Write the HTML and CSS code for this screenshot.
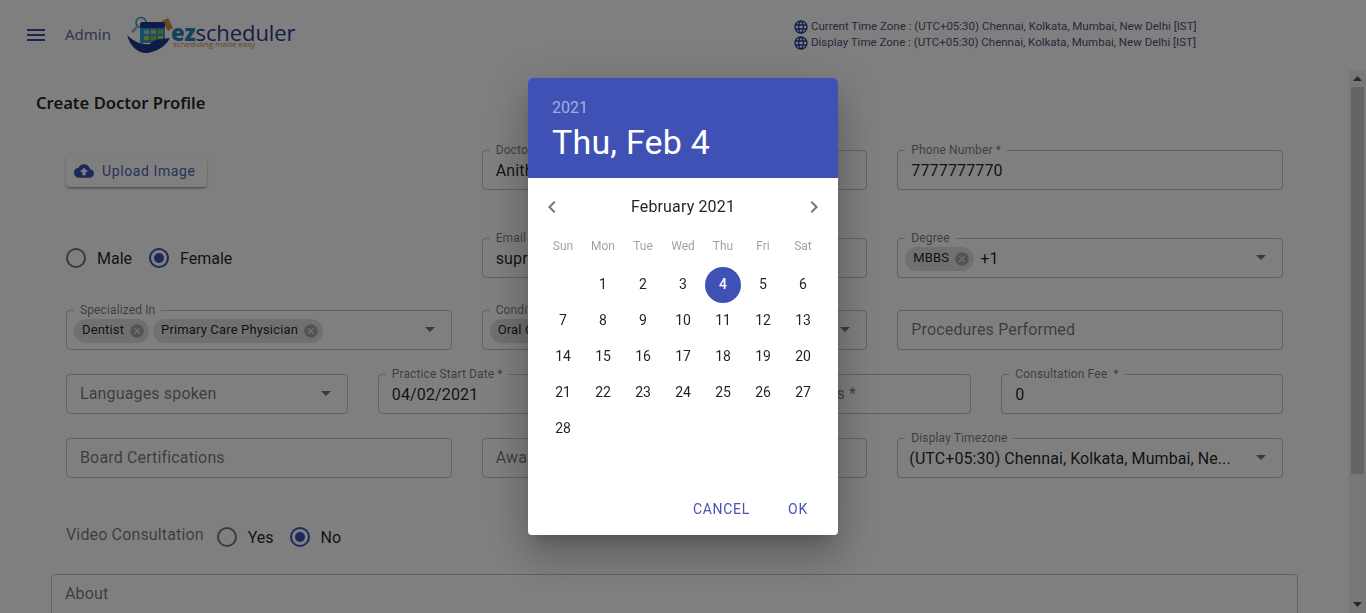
FILE: index.html
```html
<!DOCTYPE html>
<html>
<head>
    <meta charset="utf-8">
    <title>Create Doctor Profile</title>
    <link rel="stylesheet" href="styles.css">
</head>
<body>
    <header class="topbar">
        <div class="menu-icon"><span></span><span></span><span></span></div>
        <div class="admin">Admin</div>
        <div class="logo">
            <svg class="logo-mark" width="50" height="40" viewBox="0 0 50 40">
                <path d="M11 11L6 16" stroke="#a5b0bf" stroke-width="3"/>
                <circle cx="15" cy="6.5" r="5" fill="none" stroke="#2f9fc4" stroke-width="1.6"/>
                <path d="M36 5l6-3 5 10-5 3z" fill="#d98a4a"/>
                <rect x="14" y="8" width="25" height="19" fill="#2aa0c8"/>
                <rect x="14" y="6" width="25" height="6" rx="2" fill="#22368f"/>
                <rect x="18" y="14" width="5" height="4" fill="#8fd0e6"/>
                <rect x="25" y="14" width="5" height="4" fill="#e3c23f"/>
                <rect x="32" y="14" width="5" height="4" fill="#8bc34a"/>
                <rect x="18" y="20" width="5" height="4" fill="#e3c23f"/>
                <rect x="25" y="20" width="5" height="4" fill="#8bc34a"/>
                <rect x="32" y="20" width="5" height="4" fill="#e3c23f"/>
                <path d="M1 19C8 26 16 29 24 28c2-3 8-5 12-5l8-1c-4 8-12 13-22 15C12 38 4 30 1 19z" fill="#22368f"/>
            </svg>
            <div class="logo-text">
                <div class="logo-name"><b>ez</b>scheduler</div>
                <div class="logo-tag">scheduling made easy</div>
            </div>
        </div>
        <div class="zones">
            <div class="zone">
                <svg width="16" height="16" viewBox="0 0 24 24"><path d="M11.99 2C6.47 2 2 6.48 2 12s4.47 10 9.99 10C17.52 22 22 17.52 22 12S17.52 2 11.99 2zm6.93 6h-2.95c-.32-1.25-.78-2.45-1.38-3.56 1.84.63 3.37 1.91 4.33 3.56zM12 4.04c.83 1.2 1.48 2.53 1.91 3.96h-3.82c.43-1.43 1.08-2.76 1.91-3.96zM4.26 14C4.1 13.36 4 12.69 4 12s.1-1.36.26-2h3.38c-.08.66-.14 1.32-.14 2 0 .68.06 1.34.14 2H4.26zm.82 2h2.95c.32 1.25.78 2.45 1.38 3.56-1.84-.63-3.37-1.9-4.33-3.56zm2.95-8H5.08c.96-1.66 2.49-2.93 4.33-3.56C8.81 5.55 8.35 6.75 8.03 8zM12 19.96c-.83-1.2-1.48-2.53-1.91-3.96h3.82c-.43 1.43-1.08 2.76-1.91 3.96zM14.34 14H9.66c-.09-.66-.16-1.32-.16-2 0-.68.07-1.35.16-2h4.68c.09.65.16 1.32.16 2 0 .68-.07 1.34-.16 2zm.25 5.56c.6-1.11 1.06-2.31 1.38-3.56h2.95c-.96 1.65-2.49 2.93-4.33 3.56zM16.36 14c.08-.66.14-1.32.14-2 0-.68-.06-1.34-.14-2h3.38c.16.64.26 1.31.26 2s-.1 1.36-.26 2h-3.38z"/></svg>
                <span>Current Time Zone : (UTC+05:30) Chennai, Kolkata, Mumbai, New Delhi [IST]</span>
            </div>
            <div class="zone">
                <svg width="16" height="16" viewBox="0 0 24 24"><path d="M11.99 2C6.47 2 2 6.48 2 12s4.47 10 9.99 10C17.52 22 22 17.52 22 12S17.52 2 11.99 2zm6.93 6h-2.95c-.32-1.25-.78-2.45-1.38-3.56 1.84.63 3.37 1.91 4.33 3.56zM12 4.04c.83 1.2 1.48 2.53 1.91 3.96h-3.82c.43-1.43 1.08-2.76 1.91-3.96zM4.26 14C4.1 13.36 4 12.69 4 12s.1-1.36.26-2h3.38c-.08.66-.14 1.32-.14 2 0 .68.06 1.34.14 2H4.26zm.82 2h2.95c.32 1.25.78 2.45 1.38 3.56-1.84-.63-3.37-1.9-4.33-3.56zm2.95-8H5.08c.96-1.66 2.49-2.93 4.33-3.56C8.81 5.55 8.35 6.75 8.03 8zM12 19.96c-.83-1.2-1.48-2.53-1.91-3.96h3.82c-.43 1.43-1.08 2.76-1.91 3.96zM14.34 14H9.66c-.09-.66-.16-1.32-.16-2 0-.68.07-1.35.16-2h4.68c.09.65.16 1.32.16 2 0 .68-.07 1.34-.16 2zm.25 5.56c.6-1.11 1.06-2.31 1.38-3.56h2.95c-.96 1.65-2.49 2.93-4.33 3.56zM16.36 14c.08-.66.14-1.32.14-2 0-.68-.06-1.34-.14-2h3.38c.16.64.26 1.31.26 2s-.1 1.36-.26 2h-3.38z"/></svg>
                <span>Display Time Zone : (UTC+05:30) Chennai, Kolkata, Mumbai, New Delhi [IST]</span>
            </div>
        </div>
    </header>

    <div class="content">
        <main class="page">
            <h1 class="title">Create Doctor Profile</h1>
            <div class="form">
                <div class="row row-first">
                    <div class="col-4">
                        <button class="upload">
                            <svg width="20" height="20" viewBox="0 0 24 24"><path d="M19.35 10.04C18.67 6.59 15.64 4 12 4 9.11 4 6.6 5.64 5.35 8.04 2.34 8.36 0 10.91 0 14c0 3.31 2.69 6 6 6h13c2.76 0 5-2.24 5-5 0-2.64-2.05-4.78-4.65-4.96zM14 13v4h-4v-4H7l5-5 5 5h-3z"/></svg>
                            Upload Image
                        </button>
                    </div>
                    <fieldset class="field col-4"><legend>Doctor Name *</legend><div class="value">Anitha</div></fieldset>
                    <fieldset class="field col-4"><legend>Phone Number *</legend><div class="value">7777777770</div></fieldset>
                </div>

                <div class="row row-second">
                    <div class="col-4 radios radios-gender">
                        <label class="radio-item"><i class="radio"></i>Male</label>
                        <label class="radio-item"><i class="radio checked"></i>Female</label>
                    </div>
                    <fieldset class="field col-4"><legend>Email *</legend><div class="value">supriya@example.com</div></fieldset>
                    <fieldset class="field col-4"><legend>Degree</legend>
                        <div class="value chips">
                            <span class="chip">MBBS<svg viewBox="0 0 24 24"><path d="M12 2C6.47 2 2 6.47 2 12s4.47 10 10 10 10-4.47 10-10S17.53 2 12 2zm5 13.59L15.59 17 12 13.41 8.41 17 7 15.59 10.59 12 7 8.41 8.41 7 12 10.59 15.59 7 17 8.41 13.41 12 17 15.59z"/></svg></span>
                            <span class="more">+1</span>
                        </div>
                        <svg class="arrow" viewBox="0 0 24 24"><path d="M7 10l5 5 5-5z"/></svg>
                    </fieldset>
                </div>

                <div class="row">
                    <fieldset class="field col-4"><legend>Specialized In</legend>
                        <div class="value chips">
                            <span class="chip">Dentist<svg viewBox="0 0 24 24"><path d="M12 2C6.47 2 2 6.47 2 12s4.47 10 10 10 10-4.47 10-10S17.53 2 12 2zm5 13.59L15.59 17 12 13.41 8.41 17 7 15.59 10.59 12 7 8.41 8.41 7 12 10.59 15.59 7 17 8.41 13.41 12 17 15.59z"/></svg></span>
                            <span class="chip">Primary Care Physician<svg viewBox="0 0 24 24"><path d="M12 2C6.47 2 2 6.47 2 12s4.47 10 10 10 10-4.47 10-10S17.53 2 12 2zm5 13.59L15.59 17 12 13.41 8.41 17 7 15.59 10.59 12 7 8.41 8.41 7 12 10.59 15.59 7 17 8.41 13.41 12 17 15.59z"/></svg></span>
                        </div>
                        <svg class="arrow" viewBox="0 0 24 24"><path d="M7 10l5 5 5-5z"/></svg>
                    </fieldset>
                    <fieldset class="field col-4"><legend>Conditions Treated</legend>
                        <div class="value chips">
                            <span class="chip">Oral Care</span>
                        </div>
                        <svg class="arrow" viewBox="0 0 24 24"><path d="M7 10l5 5 5-5z"/></svg>
                    </fieldset>
                    <fieldset class="field col-4"><legend class="no-label"></legend><div class="value hint">Procedures Performed</div></fieldset>
                </div>

                <div class="row">
                    <fieldset class="field col-3"><legend class="no-label"></legend><div class="value hint">Languages spoken</div>
                        <svg class="arrow" viewBox="0 0 24 24"><path d="M7 10l5 5 5-5z"/></svg>
                    </fieldset>
                    <fieldset class="field col-3"><legend>Practice Start Date *</legend><div class="value">04/02/2021</div></fieldset>
                    <fieldset class="field col-3"><legend class="no-label"></legend><div class="value hint">Experience in Years *</div></fieldset>
                    <fieldset class="field col-3"><legend>Consultation Fee &nbsp;*</legend><div class="value">0</div></fieldset>
                </div>

                <div class="row">
                    <fieldset class="field col-4"><legend class="no-label"></legend><div class="value hint">Board Certifications</div></fieldset>
                    <fieldset class="field col-4"><legend class="no-label"></legend><div class="value hint">Awards</div></fieldset>
                    <fieldset class="field col-4"><legend>Display Timezone</legend>
                        <div class="value tz-value">(UTC+05:30) Chennai, Kolkata, Mumbai, Ne...</div>
                        <svg class="arrow" viewBox="0 0 24 24"><path d="M7 10l5 5 5-5z"/></svg>
                    </fieldset>
                </div>

                <div class="video">
                    <span class="video-label">Video Consultation</span>
                    <div class="radios radios-video">
                        <label class="radio-item"><i class="radio"></i>Yes</label>
                        <label class="radio-item"><i class="radio checked"></i>No</label>
                    </div>
                </div>
            </div>
            <div class="about">About</div>
        </main>

        <aside class="scrollbar">
            <div class="scroll-btn"><svg width="9" height="5" viewBox="0 0 9 5"><path d="M4.5 0L9 5H0z"/></svg></div>
            <div class="scroll-track"><div class="scroll-thumb"></div></div>
            <div class="scroll-btn"><svg width="9" height="5" viewBox="0 0 9 5"><path d="M0 0h9L4.5 5z"/></svg></div>
        </aside>
    </div>

    <!-- date picker -->
    <div class="backdrop">
        <div class="dialog">
            <div class="dialog-head">
                <div class="head-year">2021</div>
                <div class="head-date">Thu, Feb 4</div>
            </div>
            <div class="calendar">
                <div class="month-bar">
                    <span class="nav"><svg width="24" height="24" viewBox="0 0 24 24"><path d="M15.41 16.59L10.83 12l4.58-4.59L14 6l-6 6 6 6 1.41-1.41z"/></svg></span>
                    <span class="month">February 2021</span>
                    <span class="nav"><svg width="24" height="24" viewBox="0 0 24 24"><path d="M8.59 16.59L13.17 12 8.59 7.41 10 6l6 6-6 6-1.41-1.41z"/></svg></span>
                </div>
                <div class="weekdays">
                    <span>Sun</span><span>Mon</span><span>Tue</span><span>Wed</span><span>Thu</span><span>Fri</span><span>Sat</span>
                </div>
                <div class="days">
                    <span></span><span>1</span><span>2</span><span>3</span><span class="selected">4</span><span>5</span><span>6</span>
                    <span>7</span><span>8</span><span>9</span><span>10</span><span>11</span><span>12</span><span>13</span>
                    <span>14</span><span>15</span><span>16</span><span>17</span><span>18</span><span>19</span><span>20</span>
                    <span>21</span><span>22</span><span>23</span><span>24</span><span>25</span><span>26</span><span>27</span>
                    <span>28</span>
                </div>
            </div>
            <div class="dialog-actions">
                <button class="action">CANCEL</button>
                <button class="action">OK</button>
            </div>
        </div>
    </div>
</body>
</html>
```

FILE: styles.css
```css
* {
    box-sizing: border-box;
}
html, body {
    height: 100%;
}
body {
    margin: 0;
    overflow: hidden;
    background-color: #fff;
    font-family: Roboto, Arial, sans-serif;
    color: rgba(0, 0, 0, 0.87);
}

/* top bar */
.topbar {
    height: 70px;
    display: flex;
    align-items: center;
    padding-left: 27px;
}
.menu-icon {
    width: 18px;
    display: flex;
    flex-direction: column;
    gap: 3px;
}
.menu-icon span {
    height: 2px;
    background-color: #3a48a8;
}
.admin {
    margin-left: 20px;
    margin-top: -2px;
    font-family: "Noto Sans", sans-serif;
    font-size: 15px;
    color: #5f6c9f;
}
.logo {
    width: 170px;
    height: 40px;
    margin-left: 15px;
    align-self: flex-start;
    margin-top: 16px;
    display: flex;
    align-items: flex-start;
}
.logo-mark {
    flex: none;
}
.logo-text {
    margin-left: -5px;
    margin-top: 4px;
}
.logo-name {
    font-family: "Open Sans", sans-serif;
    font-size: 22px;
    line-height: 24px;
    letter-spacing: -0.1px;
    color: #2d3a8c;
}
.logo-name b {
    color: #2786b8;
    font-weight: 800;
}
.logo-tag {
    margin-top: -5px;
    margin-left: 2px;
    font-family: "Open Sans", sans-serif;
    font-size: 8px;
    line-height: 10px;
    color: #d98a4a;
}
.zones {
    margin-left: 497px;
    margin-top: -2px;
}
.zone {
    height: 16px;
    display: flex;
    align-items: center;
    gap: 2px;
    font-size: 11.5px;
    color: #4a5578;
}
.zone svg {
    margin-top: 1px;
    fill: #2d3a9c;
}

/* page */
.content {
    height: 543px;
    display: flex;
}
.page {
    flex: 1;
    min-width: 0;
    overflow: hidden;
    padding: 0 36px;
}
.title {
    margin: 22px 0 0;
    font-family: "Noto Sans", sans-serif;
    font-size: 16.6px;
    line-height: 22px;
    font-weight: 600;
}
.form {
    padding: 0 30px;
}
.row {
    display: grid;
    grid-template-columns: repeat(12, 1fr);
    column-gap: 30px;
    margin-top: 18px;
}
.row-first {
    margin-top: 30px;
}
.row-second {
    margin-top: 42px;
}
.row-second + .row {
    margin-top: 26px;
}
.col-3 {
    grid-column: span 3;
}
.col-4 {
    grid-column: span 4;
}

/* outlined fields */
.field {
    position: relative;
    min-width: 0;
    height: 46px;
    margin: 0;
    padding: 0 13px 6px;
    border: 1px solid rgba(0, 0, 0, 0.23);
    border-radius: 4px;
}
.field legend {
    height: 12px;
    margin-left: -6px;
    padding: 0 6px;
    font-size: 12px;
    line-height: 12px;
    letter-spacing: 0.12px;
    color: rgba(0, 0, 0, 0.54);
}
.field legend.no-label {
    padding: 0;
    margin: 0;
}
.value {
    height: 27px;
    margin-top: 1px;
    display: flex;
    align-items: center;
    font-size: 16px;
    letter-spacing: 0.15px;
    white-space: nowrap;
    overflow: hidden;
}
.hint {
    margin-top: 0;
    color: rgba(0, 0, 0, 0.54);
}
.tz-value {
    margin-left: -2px;
    letter-spacing: 0.08px;
}
.arrow {
    position: absolute;
    right: 9px;
    bottom: 8px;
    width: 24px;
    height: 24px;
    fill: rgba(0, 0, 0, 0.54);
}
.chips {
    margin-left: -6px;
    gap: 4px;
    overflow: visible;
}
.chip {
    height: 24px;
    display: inline-flex;
    align-items: center;
    padding: 0 0 2px 8px;
    border-radius: 12px;
    background-color: #e0e0e0;
    font-size: 13px;
    letter-spacing: 0.15px;
}
.chip svg {
    width: 16px;
    height: 16px;
    margin: 2px 4px 0 5px;
    fill: rgba(0, 0, 0, 0.26);
}
.more {
    margin-left: 2px;
}

/* upload */
.upload {
    width: 141px;
    height: 32px;
    margin-top: 11px;
    display: flex;
    align-items: center;
    gap: 8px;
    padding: 0 8px;
    border: none;
    border-radius: 4px;
    background-color: #fff;
    box-shadow: 0 1px 3px rgba(0, 0, 0, 0.2), 0 2px 2px rgba(0, 0, 0, 0.14), 0 3px 1px -2px rgba(0, 0, 0, 0.12);
    font-family: Roboto, Arial, sans-serif;
    font-size: 14px;
    letter-spacing: 0.6px;
    color: #5462b8;
}
.upload svg {
    fill: #3f51b5;
}

/* radios */
.radios {
    display: flex;
    align-items: center;
    gap: 17px;
}
.radios-gender {
    margin-top: 6px;
}
.radios-video {
    gap: 16px;
}
.radio-item {
    display: flex;
    align-items: center;
    gap: 11px;
    font-size: 16px;
}
.radio {
    width: 20px;
    height: 20px;
    display: flex;
    align-items: center;
    justify-content: center;
    border: 2px solid rgba(0, 0, 0, 0.54);
    border-radius: 50%;
}
.radio.checked {
    border-color: #3f51b5;
}
.radio.checked::after {
    content: "";
    width: 10px;
    height: 10px;
    border-radius: 50%;
    background-color: #3f51b5;
}
.video {
    display: flex;
    align-items: center;
    gap: 13px;
    margin-top: 49px;
    height: 20px;
}
.video-label {
    margin-top: -5px;
    font-size: 16px;
    letter-spacing: 0.15px;
    color: rgba(0, 0, 0, 0.54);
}
.about {
    height: 100px;
    margin: 27px 15px 0;
    padding: 9px 13px;
    border: 1px solid rgba(0, 0, 0, 0.23);
    border-radius: 4px;
    font-size: 16px;
    line-height: 19px;
    letter-spacing: 0.15px;
    color: rgba(0, 0, 0, 0.54);
}

/* scrollbar */
.scrollbar {
    width: 17px;
    flex: none;
    display: flex;
    flex-direction: column;
    background-color: #f1f1f1;
}
.scroll-btn {
    height: 17px;
    flex: none;
    display: flex;
    align-items: center;
    justify-content: center;
}
.scroll-btn svg {
    fill: #505050;
}
.scroll-track {
    flex: 1;
}
.scroll-thumb {
    width: 13px;
    height: 387px;
    margin: 0 2px;
    background-color: #c9c9c9;
}

/* date picker */
.backdrop {
    position: fixed;
    top: 0;
    left: 0;
    right: 0;
    bottom: 0;
    display: flex;
    align-items: center;
    justify-content: center;
    background-color: rgba(0, 0, 0, 0.5);
}
.dialog {
    width: 310px;
    height: 457px;
    display: flex;
    flex-direction: column;
    border-radius: 4px;
    overflow: hidden;
    background-color: #fff;
    box-shadow: 0 11px 15px -7px rgba(0, 0, 0, 0.2), 0 24px 38px 3px rgba(0, 0, 0, 0.14), 0 9px 46px 8px rgba(0, 0, 0, 0.12);
}
.dialog-head {
    height: 100px;
    flex: none;
    display: flex;
    flex-direction: column;
    justify-content: center;
    padding: 0 24px;
    background-color: #3f51b5;
    color: #fff;
}
.head-year {
    font-size: 16px;
    line-height: 28px;
    color: rgba(255, 255, 255, 0.54);
}
.head-date {
    font-size: 34px;
    line-height: 40px;
    letter-spacing: 0.2px;
}
.calendar {
    flex: 1;
}
.month-bar {
    height: 48px;
    margin-top: 4px;
    display: flex;
    align-items: center;
    justify-content: space-between;
    padding: 0 12px;
}
.nav {
    display: flex;
    margin-top: 1px;
}
.nav svg {
    fill: rgba(0, 0, 0, 0.54);
}
.month {
    font-size: 16px;
    letter-spacing: 0.15px;
}
.weekdays, .days {
    display: grid;
    grid-template-columns: repeat(7, 40px);
    margin: 0 15px;
    text-align: center;
}
.weekdays {
    margin-top: 8px;
    height: 16px;
    font-size: 12px;
    line-height: 16px;
    color: rgba(0, 0, 0, 0.38);
}
.days {
    margin-top: 13px;
    grid-auto-rows: 36px;
    font-size: 14px;
    line-height: 35px;
}
.days .selected {
    width: 36px;
    height: 36px;
    margin: 0 2px;
    border-radius: 50%;
    background-color: #3f51b5;
    color: #fff;
    font-weight: 500;
}
.dialog-actions {
    height: 52px;
    flex: none;
    display: flex;
    justify-content: flex-end;
    align-items: center;
    gap: 8px;
    padding: 0 8px 1px 0;
}
.action {
    min-width: 64px;
    height: 36px;
    padding: 0 8px;
    border: none;
    background: none;
    font-family: Roboto, Arial, sans-serif;
    font-size: 14px;
    letter-spacing: 0.7px;
    color: #4a52b0;
}
```
